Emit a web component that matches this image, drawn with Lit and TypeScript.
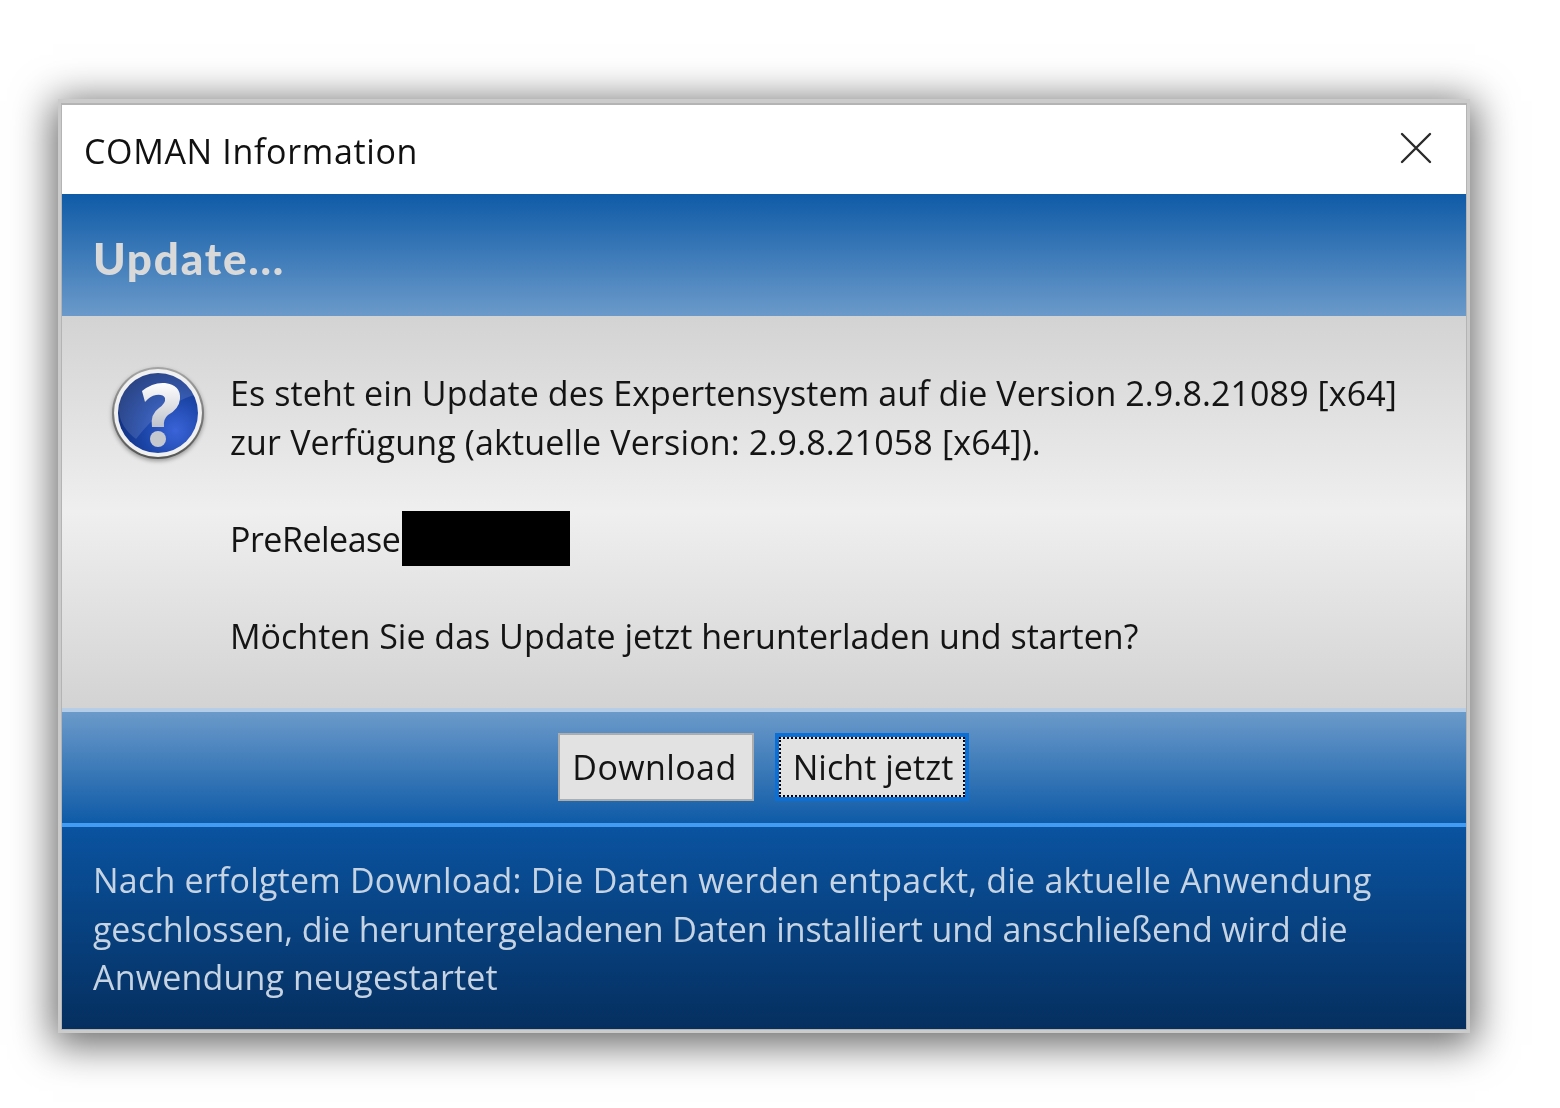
import { LitElement, html, css } from "lit";
import { customElement } from "lit/decorators.js";

@customElement("app-root")
export class AppRoot extends LitElement {
  static styles = css`
    :host {
      display: block;
      width: 1560px;
      height: 1108px;
      box-sizing: border-box;
      padding: 99px 0 0 58px;
      background: #fff;
      font-family: "Open Sans", "Noto Sans", sans-serif;
      overflow: hidden;
    }
    .window {
      width: 1412px;
      height: 934px;
      box-sizing: border-box;
      border: 3px solid #cbcbcb;
      border-top-width: 4px;
      box-shadow: 0 7px 38px 5px rgba(0, 0, 0, 0.6);
      filter: blur(0.55px);
    }
    .inner {
      height: 100%;
      box-sizing: border-box;
      border: 1px solid #b4b4b4;
      border-top-width: 2px;
      display: flex;
      flex-direction: column;
    }
    .title {
      height: 89px;
      flex: none;
      box-sizing: border-box;
      background: #fff;
      display: flex;
      align-items: center;
      justify-content: space-between;
      padding: 2px 34px 0 22px;
      color: #111;
      font-size: 34px;
      letter-spacing: 0.66px;
    }
    .close { display: block; width: 32px; height: 32px; margin-top: -6px; }
    .head {
      height: 122px;
      flex: none;
      box-sizing: border-box;
      background: linear-gradient(#0f5ba7, #6b9aca);
      display: flex;
      align-items: center;
      padding: 6px 0 0 31px;
      color: #d9d9d9;
      font-family: "Lato", "Open Sans", sans-serif;
      font-weight: 900;
      font-size: 44px;
      letter-spacing: 1.8px;
    }
    .body {
      height: 392px;
      flex: none;
      box-sizing: border-box;
      background: linear-gradient(#d3d3d3, #efefef 50%, #d3d3d3);
      display: flex;
      padding: 51px 0 0 50px;
      color: #141414;
      font-size: 34px;
      line-height: 48.5px;
      letter-spacing: 0.1px;
    }
    .qicon {
      display: block;
      width: 92px;
      height: 92px;
      flex: none;
      filter: drop-shadow(0 2px 2px rgba(0, 0, 0, 0.35));
    }
    .msg { margin-left: 26px; padding-top: 2px; white-space: nowrap; }
    .line { display: block; }
    .l2 { letter-spacing: 0.16px; }
    .pre {
      display: flex;
      align-items: center;
      height: 48.5px;
      margin: 48.5px 0;
      letter-spacing: -0.5px;
    }
    .redact { display: block; width: 168px; height: 55px; background: #000; margin-left: 2px; }
    .ask { letter-spacing: 0.01px; }
    .bar {
      height: 119px;
      flex: none;
      box-sizing: border-box;
      background: linear-gradient(#6b9aca, #0f5ba7);
      border-top: 4px solid #b5cde6;
      border-bottom: 4px solid #429cf3;
      display: flex;
      justify-content: center;
      align-items: center;
      gap: 21px;
      padding: 0 2px 2px 0;
    }
    .btn {
      box-sizing: border-box;
      height: 68px;
      border: 2px solid #adadad;
      background: #e2e2e2;
      color: #141414;
      font: inherit;
      font-size: 34px;
      padding: 0;
      display: flex;
      align-items: center;
      justify-content: center;
    }
    .dl { width: 196px; letter-spacing: 0.4px; padding-right: 2px; }
    .later { width: 194px; border: 4px solid #0b6fd6; letter-spacing: 0.05px; }
    .later span {
      display: flex;
      align-items: center;
      justify-content: center;
      width: 100%;
      height: 100%;
      border: 2px dotted #000;
      box-sizing: border-box;
      padding-left: 3px;
    }
    .foot {
      flex: 1;
      background: linear-gradient(#0a53a0, #052f5f);
      color: #c6d3e2;
      box-sizing: border-box;
      padding: 29px 0 0 31px;
      font-size: 34px;
      line-height: 48.5px;
      letter-spacing: 0.2px;
      white-space: nowrap;
    }
    .f2 { letter-spacing: -0.09px; }
    .f3 { letter-spacing: 0.16px; }
  `;

  render() {
    return html`
      <div class="window">
        <div class="inner">
          <div class="title">
            <span>COMAN Information</span>
            <svg class="close" viewBox="0 0 32 32" fill="none" stroke="#2a2a2a" stroke-width="2.4" stroke-linecap="round">
              <path d="M2 2 L30 30 M30 2 L2 30"></path>
            </svg>
          </div>
          <div class="head">Update...</div>
          <div class="body">
            <svg class="qicon" viewBox="0 0 92 92">
              <defs>
                <linearGradient id="q-rim" x1="0" y1="0" x2="0" y2="1">
                  <stop offset="0" stop-color="#a5a5a5"></stop>
                  <stop offset="1" stop-color="#555"></stop>
                </linearGradient>
                <radialGradient id="q-fill" cx="0.72" cy="0.72" r="0.85">
                  <stop offset="0" stop-color="#3a64d8"></stop>
                  <stop offset="0.5" stop-color="#1b44a6"></stop>
                  <stop offset="1" stop-color="#0c2870"></stop>
                </radialGradient>
                <linearGradient id="q-mark" x1="0" y1="0" x2="0" y2="1">
                  <stop offset="0" stop-color="#fff"></stop>
                  <stop offset="1" stop-color="#bfc2cc"></stop>
                </linearGradient>
              </defs>
              <circle cx="46" cy="46" r="46" fill="url(#q-rim)"></circle>
              <circle cx="46" cy="46" r="44" fill="#f0f0f0"></circle>
              <circle cx="46" cy="46" r="40" fill="url(#q-fill)"></circle>
              <path d="M7 44 A39 39 0 0 1 82 28 Q50 38 24 72 Q8 60 7 44 Z" fill="#fff" opacity="0.12"></path>
              <path d="M30 24 Q41 15 53 16 Q69 18 68 32 Q67 42 56 48 Q51 52 52 60 L40 60 Q38 47 47 41 Q54 36 53 31 Q51 27 44 28 Q38 29 33 35 Z" fill="url(#q-mark)"></path>
              <circle cx="46" cy="72" r="8" fill="#c6c8d0"></circle>
            </svg>
            <div class="msg">
              <span class="line">Es steht ein Update des Expertensystem auf die Version 2.9.8.21089 [x64]</span>
              <span class="line l2">zur Verfügung (aktuelle Version: 2.9.8.21058 [x64]).</span>
              <div class="pre"><span>PreRelease</span><span class="redact"></span></div>
              <span class="line ask">Möchten Sie das Update jetzt herunterladen und starten?</span>
            </div>
          </div>
          <div class="bar">
            <button class="btn dl">Download</button>
            <button class="btn later"><span>Nicht jetzt</span></button>
          </div>
          <div class="foot">
            <span class="line">Nach erfolgtem Download: Die Daten werden entpackt, die aktuelle Anwendung</span>
            <span class="line f2">geschlossen, die heruntergeladenen Daten installiert und anschließend wird die</span>
            <span class="line f3">Anwendung neugestartet</span>
          </div>
        </div>
      </div>
    `;
  }
}
